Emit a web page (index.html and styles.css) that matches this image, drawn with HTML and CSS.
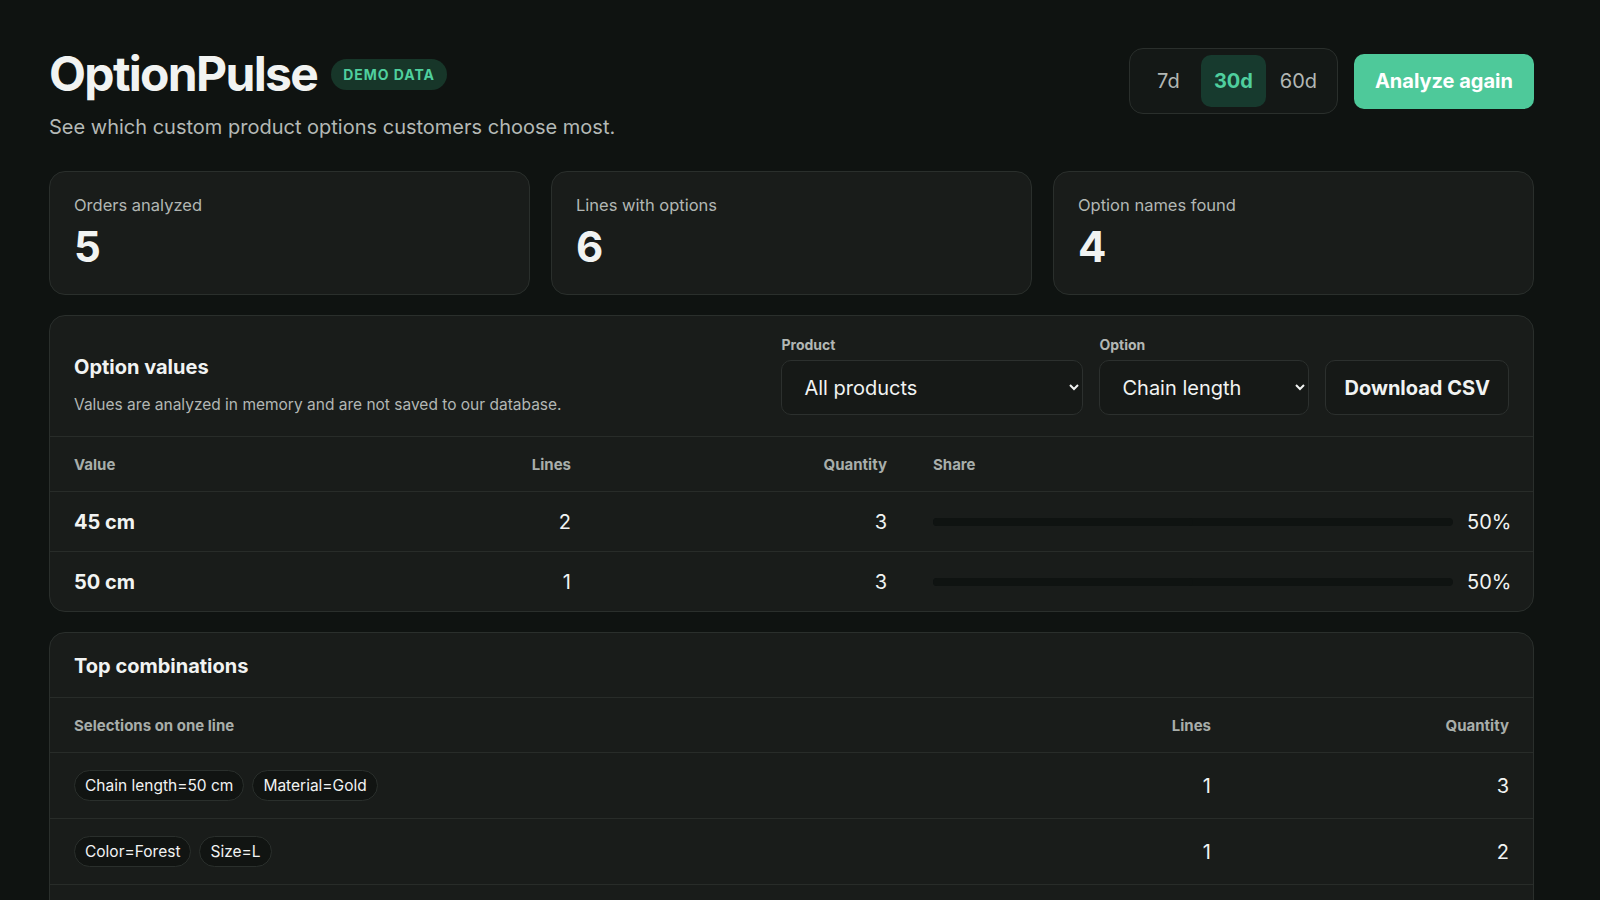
FILE: index.html
```html
<!DOCTYPE html>
<html lang="en">
<head>
    <meta charset="UTF-8">
    <title>OptionPulse</title>
    <link rel="stylesheet" href="styles.css">
</head>
<body>
    <div class="wrapper">
        <header class="top">
            <div class="brand">
                <div class="brand-line">
                    <h1 class="title">OptionPulse</h1>
                    <span class="badge">DEMO DATA</span>
                </div>
                <p class="subtitle">See which custom product options customers choose most.</p>
            </div>
            <div class="actions">
                <div class="range">
                    <button class="range-btn">7d</button>
                    <button class="range-btn range-btn-active">30d</button>
                    <button class="range-btn">60d</button>
                </div>
                <button class="primary-btn">Analyze again</button>
            </div>
        </header>

        <div class="stats">
            <div class="stat-card">
                <div class="stat-label">Orders analyzed</div>
                <div class="stat-value">5</div>
            </div>
            <div class="stat-card">
                <div class="stat-label">Lines with options</div>
                <div class="stat-value">6</div>
            </div>
            <div class="stat-card">
                <div class="stat-label">Option names found</div>
                <div class="stat-value">4</div>
            </div>
        </div>

        <section class="panel">
            <div class="panel-head">
                <div class="panel-intro">
                    <h2 class="panel-title">Option values</h2>
                    <p class="panel-note">Values are analyzed in memory and are not saved to our database.</p>
                </div>
                <div class="filters">
                    <label class="field">
                        <span class="field-label">Product</span>
                        <select class="select select-product">
                            <option>All products</option>
                            <option>Pendant necklace</option>
                            <option>Linen shirt</option>
                        </select>
                    </label>
                    <label class="field">
                        <span class="field-label">Option</span>
                        <select class="select select-option">
                            <option>Chain length</option>
                            <option>Material</option>
                            <option>Color</option>
                            <option>Size</option>
                        </select>
                    </label>
                    <button class="ghost-btn">Download CSV</button>
                </div>
            </div>

            <div class="values-row values-head">
                <div>Value</div>
                <div class="num">Lines</div>
                <div class="num">Quantity</div>
                <div>Share</div>
            </div>
            <div class="values-row">
                <div class="value-name">45 cm</div>
                <div class="num">2</div>
                <div class="num">3</div>
                <div class="share">
                    <div class="bar"><div class="bar-fill" style="width: 50%"></div></div>
                    <span class="share-pct">50%</span>
                </div>
            </div>
            <div class="values-row">
                <div class="value-name">50 cm</div>
                <div class="num">1</div>
                <div class="num">3</div>
                <div class="share">
                    <div class="bar"><div class="bar-fill" style="width: 50%"></div></div>
                    <span class="share-pct">50%</span>
                </div>
            </div>
        </section>

        <section class="panel">
            <div class="panel-head panel-head-simple">
                <h2 class="panel-title">Top combinations</h2>
            </div>
            <div class="combo-row combo-head">
                <div>Selections on one line</div>
                <div class="num">Lines</div>
                <div class="num">Quantity</div>
            </div>
            <div class="combo-row">
                <div class="chips"><span class="chip">Chain length=50 cm</span><span class="chip">Material=Gold</span></div>
                <div class="num">1</div>
                <div class="num">3</div>
            </div>
            <div class="combo-row">
                <div class="chips"><span class="chip">Color=Forest</span><span class="chip">Size=L</span></div>
                <div class="num">1</div>
                <div class="num">2</div>
            </div>
            <div class="combo-row">
                <div class="chips"><span class="chip">Chain length=45 cm</span><span class="chip">Material=Silver</span></div>
                <div class="num">1</div>
                <div class="num">2</div>
            </div>
            <div class="combo-row">
                <div class="chips"><span class="chip">Chain length=45 cm</span><span class="chip">Material=Gold</span></div>
                <div class="num">1</div>
                <div class="num">1</div>
            </div>
            <div class="combo-row">
                <div class="chips"><span class="chip">Color=Sand</span><span class="chip">Size=M</span></div>
                <div class="num">1</div>
                <div class="num">1</div>
            </div>
            <div class="combo-row">
                <div class="chips"><span class="chip">Color=Forest</span><span class="chip">Size=M</span></div>
                <div class="num">1</div>
                <div class="num">1</div>
            </div>
        </section>
    </div>
</body>
</html>
```

FILE: styles.css
```css
html {
    color-scheme: dark;
}

body {
    margin: 0;
    background-color: #0f1311;
    color: #f1f3f2;
    font-family: Inter, "Noto Sans", "Liberation Sans", sans-serif;
}

.wrapper {
    padding: 48px 66px 60px 49px;
}

/* header */

.top {
    display: flex;
    justify-content: space-between;
    align-items: flex-start;
    margin-bottom: 31px;
}

.brand-line {
    display: flex;
    align-items: center;
}

.title {
    margin: 0;
    font-size: 48px;
    line-height: 52px;
    font-weight: 700;
    letter-spacing: -0.035em;
}

.badge {
    margin-left: 14px;
    padding: 0 12px;
    height: 31px;
    line-height: 31px;
    border-radius: 16px;
    background-color: #173629;
    color: #4fcf9e;
    font-size: 14px;
    font-weight: 700;
    letter-spacing: 0.07em;
}

.subtitle {
    margin: 14px 0 0;
    font-size: 20px;
    line-height: 26px;
    color: #b4b9b6;
}

.actions {
    display: flex;
    align-items: center;
    gap: 16px;
}

.range {
    display: flex;
    padding: 6px;
    border: 1px solid #2a2f2c;
    border-radius: 14px;
    background-color: #141816;
}

.range-btn {
    width: 65px;
    height: 52px;
    border: 0;
    border-radius: 10px;
    background: none;
    color: #b2b7b4;
    font-family: inherit;
    font-size: 20px;
    cursor: pointer;
}

.range-btn-active {
    background-color: #173a2e;
    color: #4fcf9e;
    font-weight: 700;
}

.primary-btn {
    height: 55px;
    padding: 0 21px;
    border: 0;
    border-radius: 10px;
    background-color: #4ec99a;
    color: #ffffff;
    font-family: inherit;
    font-size: 20px;
    font-weight: 700;
    cursor: pointer;
}

/* stat cards */

.stats {
    display: grid;
    grid-template-columns: repeat(3, 1fr);
    gap: 21px;
    margin-bottom: 20px;
}

.stat-card {
    padding: 23px 24px 24px;
    border: 1px solid #2a2f2c;
    border-radius: 16px;
    background-color: #191c1a;
}

.stat-label {
    font-size: 16.5px;
    line-height: 20px;
    color: #b2b7b4;
}

.stat-value {
    margin-top: 9px;
    font-size: 42px;
    line-height: 46px;
    font-weight: 700;
}

/* panels */

.panel {
    margin-bottom: 20px;
    border: 1px solid #2a2f2c;
    border-radius: 16px;
    background-color: #191c1a;
    overflow: hidden;
}

.panel-head {
    display: flex;
    justify-content: space-between;
    align-items: flex-end;
    padding: 20px 24px 21px;
}

.panel-head-simple {
    padding: 21px 24px 19px;
}

.panel-title {
    margin: 0;
    font-size: 20px;
    line-height: 24px;
    font-weight: 700;
}

.panel-note {
    margin: 16px 0 0;
    font-size: 15.5px;
    line-height: 20px;
    color: #b2b7b4;
}

.filters {
    display: flex;
    align-items: flex-end;
    gap: 16px;
}

.field {
    display: flex;
    flex-direction: column;
    gap: 6px;
}

.field-label {
    font-size: 14px;
    line-height: 18px;
    font-weight: 700;
    color: #b2b7b4;
}

.select {
    height: 55px;
    padding: 0 10px 0 18px;
    border: 1px solid #2c302e;
    border-radius: 10px;
    background-color: #161917;
    color: #f1f3f2;
    font-family: inherit;
    font-size: 20px;
}

.select-product {
    width: 302px;
}

.select-option {
    width: 210px;
}

.ghost-btn {
    height: 55px;
    padding: 0 18px;
    border: 1px solid #2c302e;
    border-radius: 10px;
    background-color: #161917;
    color: #f1f3f2;
    font-family: inherit;
    font-size: 20px;
    font-weight: 700;
    cursor: pointer;
}

/* option values table */

.values-row {
    display: grid;
    grid-template-columns: 300px 151px 270px 1fr;
    column-gap: 46px;
    align-items: center;
    height: 59px;
    padding: 0 24px;
    border-top: 1px solid #282c29;
    font-size: 20px;
}

.num {
    text-align: right;
}

.value-name {
    font-weight: 700;
}

.share {
    display: flex;
    align-items: center;
    gap: 14px;
}

.bar {
    flex: 1;
    height: 8px;
    border-radius: 4px;
    background-color: #0f1311;
}

.bar-fill {
    height: 100%;
    border-radius: 4px;
    background-color: #0f1311;
}

.share-pct {
    width: 42px;
    text-align: right;
}

/* combinations table */

.combo-row {
    display: grid;
    grid-template-columns: 1fr 160px 250px;
    column-gap: 48px;
    align-items: center;
    height: 65px;
    padding: 0 24px;
    border-top: 1px solid #282c29;
    font-size: 20px;
}

.values-head, .combo-head {
    height: 54px;
    font-size: 15px;
    font-weight: 700;
    color: #a8aeaa;
}

.chips {
    display: flex;
    gap: 8px;
}

.chip {
    height: 29px;
    line-height: 29px;
    padding: 0 10px;
    border: 1px solid #2a2f2c;
    border-radius: 16px;
    background-color: #111412;
    font-size: 15.5px;
}
```
